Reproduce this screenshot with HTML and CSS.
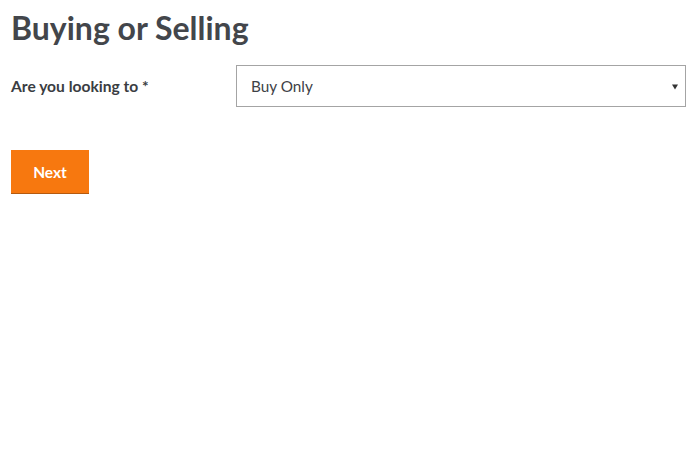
FILE: index.html
```html
<!DOCTYPE html>
<html>
<head>
<meta charset="utf-8">
<link rel="stylesheet" href="styles.css">
</head>
<body>
<div class="page">
  <h1 class="title">Buying or Selling</h1>
  <div class="row">
    <label class="label">Are you looking to *</label>
    <div class="select">
      <span class="value">Buy Only</span>
      <svg class="caret" width="6" height="6" viewBox="0 0 6 6"><path d="M0 0.5H6L3 5.5Z" fill="#333"/></svg>
    </div>
  </div>
  <button class="btn">Next</button>
</div>
</body>
</html>
```
FILE: styles.css
```css
html, body { margin: 0; padding: 0; background: #fff; }
body { font-family: Lato, "Open Sans", sans-serif; color: #43464b; }
.page { padding: 9px 13px 0 11px; display: flex; flex-direction: column; align-items: flex-start; }
.title { margin: 0; font-size: 32px; font-weight: 700; line-height: 38px; color: #43464b; }
.row { display: flex; align-items: center; width: 100%; margin-top: 18px; }
.label { width: 225px; font-size: 15.6px; font-weight: 700; color: #3a3d42; }
.select { flex: 1; height: 40px; border: 1px solid #a4a4a4; display: flex; align-items: center; justify-content: space-between; padding: 0 7px 0 14px; box-sizing: content-box; }
.value { font-size: 15.3px; color: #3e4146; }
.caret { display: block; margin-top: 1px; }
.btn { margin-top: 43px; width: 78px; height: 44px; background: #f7780f; border: 0; border-bottom: 1px solid #b55a0e; color: #fff; font-family: inherit; font-size: 15.5px; font-weight: 700; padding: 0; }
```
